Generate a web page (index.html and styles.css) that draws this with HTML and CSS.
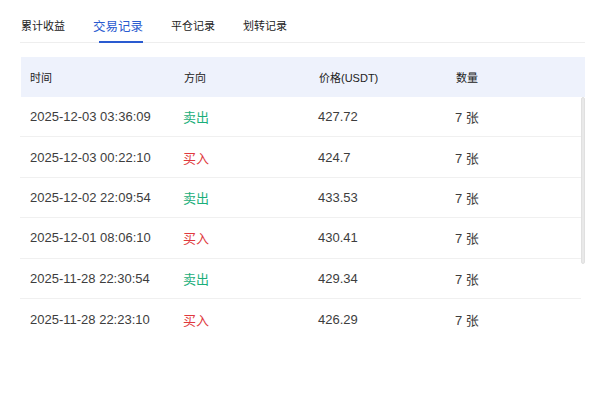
FILE: index.html
```html
<!DOCTYPE html>
<html>
<head>
    <meta charset="utf-8">
    <title>交易记录</title>
    <link rel="stylesheet" href="styles.css">
</head>
<body>
    <div class="panel">
        <div class="tabs">
            <div class="tab">累计收益</div>
            <div class="tab active">交易记录</div>
            <div class="tab">平仓记录</div>
            <div class="tab">划转记录</div>
        </div>

        <div class="table">
            <div class="thead">
                <div>时间</div>
                <div>方向</div>
                <div>价格(USDT)</div>
                <div>数量</div>
            </div>
            <div class="tbody">
                <div class="row">
                    <div>2025-12-03 03:36:09</div>
                    <div class="sell">卖出</div>
                    <div>427.72</div>
                    <div>7 张</div>
                </div>
                <div class="row">
                    <div>2025-12-03 00:22:10</div>
                    <div class="buy">买入</div>
                    <div>424.7</div>
                    <div>7 张</div>
                </div>
                <div class="row">
                    <div>2025-12-02 22:09:54</div>
                    <div class="sell">卖出</div>
                    <div>433.53</div>
                    <div>7 张</div>
                </div>
                <div class="row">
                    <div>2025-12-01 08:06:10</div>
                    <div class="buy">买入</div>
                    <div>430.41</div>
                    <div>7 张</div>
                </div>
                <div class="row">
                    <div>2025-11-28 22:30:54</div>
                    <div class="sell">卖出</div>
                    <div>429.34</div>
                    <div>7 张</div>
                </div>
                <div class="row">
                    <div>2025-11-28 22:23:10</div>
                    <div class="buy">买入</div>
                    <div>426.29</div>
                    <div>7 张</div>
                </div>
                <!-- scrollbar thumb, list is scrolled to top -->
                <div class="thumb"></div>
            </div>
        </div>
    </div>
</body>
</html>
```

FILE: styles.css
```css
body {
    margin: 0;
    background: #ffffff;
    font-family: "Liberation Sans", "Noto Sans CJK SC", sans-serif;
    color: #333333;
}
.panel {
    padding: 0 19px 0 20px;
}
.tabs {
    display: flex;
    gap: 28px;
    height: 43px;
    box-sizing: border-box;
    border-bottom: 1px solid #eeeeee;
    padding-left: 1px;
}
.tab {
    position: relative;
    display: flex;
    align-items: center;
    padding-top: 8px;
    height: 42px;
    box-sizing: border-box;
    font-size: 11px;
    color: #222222;
}
.tab.active {
    font-size: 12.5px;
    color: #2a5bd0;
}
.tab.active::after {
    content: "";
    position: absolute;
    right: 0;
    bottom: -1px;
    width: 44px;
    height: 2px;
    background: #2a5bd0;
}
.table {
    margin-top: 14px;
}
.thead,
.row {
    display: grid;
    grid-template-columns: 153px 135px 137px 1fr;
    align-items: center;
}
.thead {
    height: 40px;
    background: #eef2fc;
    font-size: 11px;
    color: #222222;
    margin-left: 1px;
}
.thead div {
    padding-left: 9px;
}
.thead div + div {
    padding-left: 10px;
}
.tbody {
    position: relative;
    height: 260px;
    padding-right: 4px;
    overflow: hidden;
}
.thumb {
    position: absolute;
    top: 0;
    right: 0;
    width: 4px;
    height: 167px;
    box-sizing: border-box;
    background: #e9e9e9;
    border: 1px solid #e0e0e0;
    border-radius: 2px;
}
.row {
    height: 40.4px;
    box-sizing: border-box;
    border-bottom: 1px solid #f0f0f0;
    font-size: 13px;
    color: #3d3d3d;
}
.row:nth-child(6) {
    border-bottom: none;
}
.row div {
    padding-left: 10px;
}
.sell {
    color: #1aae7a;
}
.buy {
    color: #e0393e;
}
```
